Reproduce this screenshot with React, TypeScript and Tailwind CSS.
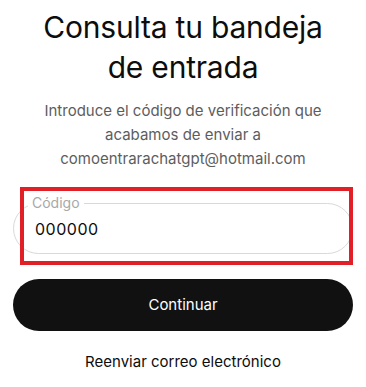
export default function App() {
  return (
    <div
      className="w-[366px] h-[387px] bg-white px-[13px] pt-[7px] flex flex-col items-center"
      style={{ fontFamily: "Inter, 'Noto Sans', sans-serif" }}
    >
      <h1 className="text-[30px] leading-[40px] text-center text-[#0d0d0d] font-normal tracking-[-0.2px]">
        Consulta tu bandeja
        <br />
        de entrada
      </h1>
      <p className="mt-[12px] text-[15px] leading-[24px] text-center text-[#5d5d5d]">
        Introduce el código de verificación que
        <br />
        acabamos de enviar a
        <br />
        comoentrarachatgpt@hotmail.com
      </p>

      <div className="relative mt-[32px] w-full">
        <div className="relative h-[51px] w-full rounded-full border border-[#d9d9d9] flex items-center px-[21px]">
          <span className="absolute -top-[10px] left-[14px] bg-white px-[4px] text-[14px] leading-[18px] text-[#a8a8a8]">
            Código
          </span>
          <span className="text-[16px] text-[#0d0d0d] tracking-[0.5px]">000000</span>
        </div>
        <div className="pointer-events-none absolute -top-[16px] left-[7px] w-[333px] h-[78px] border-[4px] border-[#e01f26]" />
      </div>

      <button className="mt-[25px] h-[52px] w-full rounded-full bg-[#111111] text-white text-[15px]">
        Continuar
      </button>

      <div className="mt-[20px] text-[15px] text-[#0d0d0d]">Reenviar correo electrónico</div>
    </div>
  );
}
